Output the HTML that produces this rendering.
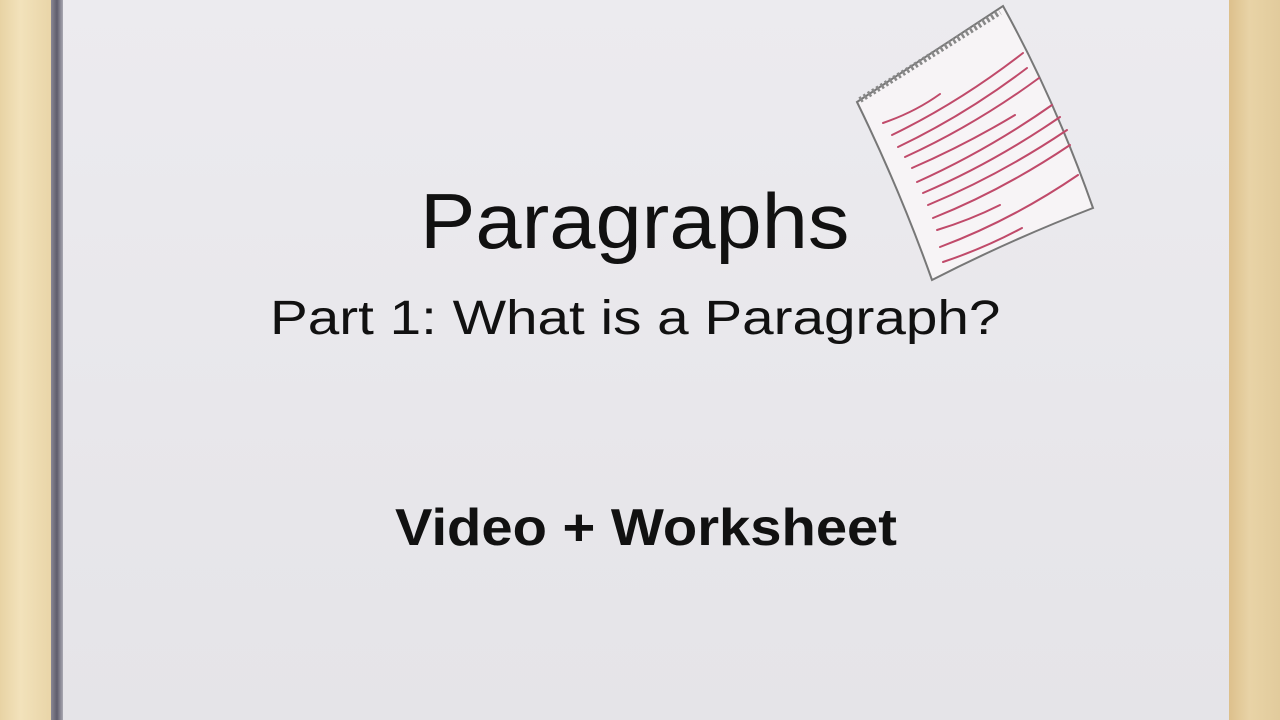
<!DOCTYPE html>
<html><head><style>
body{margin:0;width:1280px;height:720px;overflow:hidden;position:relative;background:#e9e8ec;font-family:"Liberation Sans",sans-serif}
.wl{position:absolute;left:0;top:0;width:51px;height:720px;background:linear-gradient(90deg,#e8d3a4,#f2e2bb 40%,#e9d5a8)}
.ws{position:absolute;left:51px;top:0;width:12px;height:720px;background:linear-gradient(90deg,#8a8894,#5f5d6c 50%,#a9a8b2)}
.wr{position:absolute;left:1229px;top:0;width:51px;height:720px;background:linear-gradient(90deg,#ddc08c,#e8d3a6 40%,#e2cb9c)}
.board{position:absolute;left:63px;top:0;width:1166px;height:720px;background:linear-gradient(180deg,#ecebef,#e5e4e8)}
.t{position:absolute;white-space:nowrap;color:#111;transform-origin:0 0}
</style></head><body>
<div class="wl"></div><div class="ws"></div><div class="board"></div><div class="wr"></div>
<svg style="position:absolute;left:0;top:0" width="1280" height="720">
<path d="M857,102 L1003,6 Q1055,100 1093,208 Q1010,240 932,280 Q900,190 857,102 Z" fill="#f7f4f6" stroke="#777" stroke-width="2"/>
<path d="M860,100 L1000,12" stroke="#888" stroke-width="6" stroke-dasharray="2.5 2.5" fill="none"/>
<g stroke="#c04a6a" stroke-width="2" fill="none" stroke-linecap="round">
<path d="M883,123 Q915,112 940,94"/>
<path d="M892,135 Q960,102 1023,53"/>
<path d="M898,147 Q965,115 1027,68"/>
<path d="M905,157 Q975,125 1039,78"/>
<path d="M912,168 Q965,145 1015,115"/>
<path d="M917,182 Q988,150 1052,105"/>
<path d="M923,193 Q993,163 1060,117"/>
<path d="M928,205 Q1000,175 1067,130"/>
<path d="M933,218 Q1003,190 1070,145"/>
<path d="M937,230 Q970,220 1000,205"/>
<path d="M940,247 Q1012,220 1078,175"/>
<path d="M943,262 Q985,248 1022,228"/>
</g>
</svg>
<div class="t" style="left:420px;top:176px;font-size:78px;transform:scaleX(1.065)">Paragraphs</div>
<div class="t" style="left:270px;top:291px;font-size:48px;transform:scaleX(1.18)">Part 1: What is a Paragraph?</div>
<div class="t" style="left:395px;top:498px;font-size:52px;font-weight:bold;transform:scaleX(1.08)">Video + Worksheet</div>
</body></html>
